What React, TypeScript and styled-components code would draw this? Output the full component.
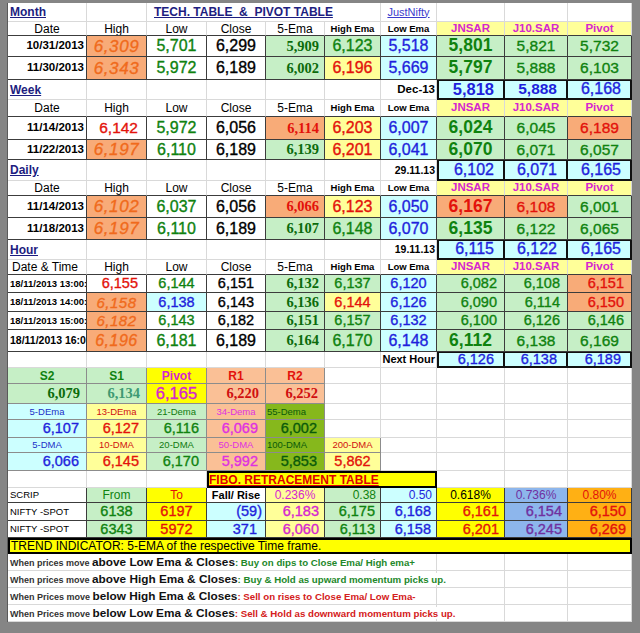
import React from "react";
import styled, { createGlobalStyle, css } from "styled-components";

const SANS = `"Liberation Sans", Arial, sans-serif`;
const SERIF = `"Liberation Serif", "Times New Roman", serif`;

const GREEN_BG = "#c6efc6";
const CYAN_BG = "#ccffff";
const PALE_Y = "#ffff99";
const YELLOW = "#ffff00";
const ORANGE_BG = "#f8ab78";
const PEACH = "#fac096";
const OLIVE = "#86b81c";
const PERI = "#8db6ec";
const AMBER = "#ffb014";

const GREEN = "#0f820f";
const DKGREEN = "#0b6b0b";
const RED = "#e3120b";
const BLUE = "#1f1fdc";
const ORANGE_T = "#f06a1c";
const MAGENTA = "#d526cf";
const NAVY = "#1d1d80";
const PURPLE = "#7030a0";

const COLS = "79px 60px 60px 59px 59px 56px 56px 68px 63px 64px";

type Align = "left" | "center" | "right";
type Line = "light" | "mid" | "dark";
type Look = {
  bg?: string;
  color?: string;
  fs?: number;
  bold?: boolean;
  italic?: boolean;
  serif?: boolean;
  al?: Align;
  pad?: number;
  ls?: number;
  u?: boolean;
  line?: Line;
  lineB?: Line;
  box?: boolean;
  boxL?: boolean;
  thick?: boolean;
  spill?: boolean;
};
type Spec = [React.ReactNode, Look, number?];

const LINE: Record<Line, string> = { light: "#d9d9d9", mid: "#8c8c8c", dark: "#3c3c3c" };
const JUSTIFY: Record<Align, string> = { left: "flex-start", center: "center", right: "flex-end" };

const GlobalStyle = createGlobalStyle`
  html, body {
    margin: 0;
    padding: 0;
    background: #858585;
  }
  body {
    font-family: ${SANS};
  }
`;

const Page = styled.div`
  width: 640px;
  height: 633px;
  padding: 3px 0 0 7px;
  box-sizing: border-box;
  background: #858585;
`;

const Sheet = styled.div`
  width: 625px;
  background: #ffffff;
  border-left: 1px solid #5a5a5a;
  box-sizing: border-box;
`;

const Row = styled.div<{ $h: number }>`
  display: grid;
  grid-template-columns: ${COLS};
  height: ${(p) => p.$h}px;
`;

const Cell = styled.div<{ $l: Look; $span: number }>`
  grid-column: span ${(p) => p.$span};
  display: flex;
  align-items: center;
  justify-content: ${(p) => JUSTIFY[p.$l.al ?? "center"]};
  box-sizing: border-box;
  min-width: 0;
  padding: 0 ${(p) => p.$l.pad ?? 2}px;
  overflow: ${(p) => (p.$l.spill ? "visible" : "hidden")};
  white-space: pre;
  line-height: 1;
  background: ${(p) => p.$l.bg ?? "#ffffff"};
  color: ${(p) => p.$l.color ?? "#000000"};
  font-family: ${(p) => (p.$l.serif ? SERIF : SANS)};
  font-size: ${(p) => p.$l.fs ?? 12}px;
  font-weight: ${(p) => (p.$l.bold ? 700 : 400)};
  font-style: ${(p) => (p.$l.italic ? "italic" : "normal")};
  letter-spacing: ${(p) => p.$l.ls ?? 0}px;
  text-decoration: ${(p) => (p.$l.u ? "underline" : "none")};
  text-underline-offset: 1px;
  -webkit-text-stroke: ${(p) => (!p.$l.bold && (p.$l.fs ?? 12) >= 13 ? 0.35 : 0)}px currentColor;
  border-right: 1px solid ${(p) => LINE[p.$l.line ?? "light"]};
  border-bottom: 1px solid ${(p) => LINE[p.$l.lineB ?? p.$l.line ?? "light"]};
  ${(p) =>
    p.$l.box &&
    css`
      border-right: 2px solid #111;
      border-bottom: 2px solid #111;
      box-shadow: inset 0 1px 0 #111;
    `}
  ${(p) =>
    p.$l.boxL &&
    css`
      border-left: 2px solid #111;
    `}
  ${(p) =>
    p.$l.thick &&
    css`
      border: 2px solid #000;
    `}
`;

// overflowing text of the rule rows, painted over the grid lines it crosses
const Spill = styled.span`
  position: relative;
  z-index: 1;
  background: #ffffff;
  padding-right: 2px;
`;
const Lead = styled.span`
  font-size: 9px;
  font-weight: 700;
  color: #333333;
`;
const Key = styled.span`
  font-size: 11.8px;
  font-weight: 700;
  color: #111111;
`;
const Tail = styled.span<{ $c: string }>`
  font-size: 9.7px;
  font-weight: 700;
  color: ${(p) => p.$c};
`;

const E: Spec = ["", {}];
const sz = (l: Look, fs: number, extra: Look = {}): Look => ({ ...l, fs, ...extra });

const label: Look = { bold: true, u: true, color: NAVY, fs: 12, al: "left", pad: 2 };
const hd: Look = { fs: 12, lineB: "dark" };
const hdS: Look = { fs: 9.5, bold: true, lineB: "dark" };
const hdJ: Look = { fs: 11.5, bold: true, color: MAGENTA, bg: PALE_Y, lineB: "dark" };
const date: Look = { fs: 11.5, bold: true, al: "right", pad: 2, line: "dark" };
const hdate: Look = { fs: 9.5, bold: true, al: "left", pad: 2, line: "dark" };
const hiO: Look = { bg: ORANGE_BG, color: ORANGE_T, italic: true, fs: 17, ls: 0.6, line: "dark" };
const hiR: Look = { color: RED, fs: 15.5, line: "dark", al: "right", pad: 8 };
const low: Look = { color: GREEN, fs: 16, line: "dark" };
const lowC: Look = { bg: CYAN_BG, color: BLUE, fs: 14.5, line: "dark" };
const close: Look = { fs: 16, line: "dark" };
const emaG: Look = { bg: GREEN_BG, color: DKGREEN, serif: true, bold: true, fs: 14.5, al: "right", pad: 5, line: "dark" };
const emaO: Look = { ...emaG, bg: ORANGE_BG, color: RED };
const heG: Look = { bg: GREEN_BG, color: GREEN, fs: 16, line: "dark" };
const heY: Look = { bg: PALE_Y, color: RED, fs: 16, line: "dark" };
const le: Look = { bg: CYAN_BG, color: BLUE, fs: 16, line: "dark" };
const jnG: Look = { bg: GREEN_BG, color: GREEN, fs: 17.5, bold: true, line: "dark" };
const jnO: Look = { ...jnG, bg: ORANGE_BG, color: RED };
const jG: Look = { bg: GREEN_BG, color: GREEN, fs: 15.5, line: "dark" };
const jO: Look = { ...jG, bg: ORANGE_BG, color: RED };
const jR: Look = { ...jG, fs: 14.5, al: "right", pad: 7 };
const jOR: Look = { ...jR, bg: ORANGE_BG, color: RED };
const boxC: Look = { bg: CYAN_BG, color: BLUE, fs: 16, al: "right", pad: 9, box: true };
const boxN: Look = { ...boxC, fs: 14.5 };
const stamp: Look = { bold: true, fs: 11.5, al: "right", pad: 1 };

const header = (first: string, look: Look = hd): Spec[] => [
  [first, look],
  ["High", hd],
  ["Low", hd],
  ["Close", hd],
  ["5-Ema", hd],
  ["High Ema", hdS],
  ["Low Ema", hdS],
  ["JNSAR", hdJ],
  ["J10.SAR", hdJ],
  ["Pivot", hdJ],
];

const pv = (bg: string, color: string, extra: Look = {}): Look => ({
  bg,
  color,
  fs: 12,
  bold: true,
  line: "mid",
  ...extra,
});
const pvNum = (bg: string, color: string): Look => ({
  bg,
  color,
  serif: true,
  bold: true,
  fs: 14.5,
  al: "right",
  pad: 6,
  line: "mid",
});
const maLab = (bg: string, color: string, al: Align = "center"): Look => ({
  bg,
  color,
  fs: 9.5,
  al,
  pad: 1,
  line: "mid",
});
const maNum = (bg: string, color: string): Look => ({
  bg,
  color,
  fs: 14.5,
  al: "right",
  pad: 7,
  line: "mid",
});
const fib = (bg: string, color: string, al: Align = "right", pad = 5): Look => ({
  bg,
  color,
  fs: 14.5,
  al,
  pad,
  line: "dark",
});
const fibH = (bg: string, color: string, al: Align = "center"): Look => ({
  bg,
  color,
  fs: 12,
  al,
  pad: 4,
  line: "dark",
});

const when = (lead: string, key: string, tail: string, c: string): Spec[] => [
  [
    <Spill>
      <Lead>{lead}</Lead>
      <Key>{key}</Key>
      <Tail $c={c}>{tail}</Tail>
    </Spill>,
    { al: "left", pad: 2, spill: true },
    7,
  ],
  E,
  E,
  E,
];

const ROWS: [number, Spec[]][] = [
  // Month
  [
    19,
    [
      ["Month", label],
      E,
      ["TECH. TABLE  &  PIVOT TABLE", { bold: true, u: true, color: NAVY, fs: 12, al: "left", pad: 7 }, 4],
      ["JustNifty", { u: true, color: "#3b3bcc", fs: 11 }],
      E,
      E,
      E,
    ],
  ],
  [14, header("Date")],
  [
    21,
    [
      ["10/31/2013", date],
      ["6,309", hiO],
      ["5,701", low],
      ["6,299", close],
      ["5,909", emaG],
      ["6,123", heG],
      ["5,518", le],
      ["5,801", jnG],
      ["5,821", jG],
      ["5,732", jG],
    ],
  ],
  [
    23,
    [
      ["11/30/2013", date],
      ["6,343", hiO],
      ["5,972", low],
      ["6,189", close],
      ["6,002", emaG],
      ["6,196", heY],
      ["5,669", le],
      ["5,797", jnG],
      ["5,888", jG],
      ["6,103", jG],
    ],
  ],
  // Week
  [
    20,
    [
      ["Week", label],
      E,
      E,
      E,
      E,
      E,
      ["Dec-13", stamp],
      ["5,818", { ...boxC, boxL: true, bold: true, fs: 16.5 }],
      ["5,888", { ...boxC, bold: true, fs: 15.5 }],
      ["6,168", boxC],
    ],
  ],
  [17, header("Date")],
  [
    23,
    [
      ["11/14/2013", date],
      ["6,142", hiR],
      ["5,972", low],
      ["6,056", close],
      ["6,114", emaO],
      ["6,203", heY],
      ["6,007", le],
      ["6,024", jnG],
      ["6,045", jG],
      ["6,189", jO],
    ],
  ],
  [
    20,
    [
      ["11/22/2013", date],
      ["6,197", hiO],
      ["6,110", low],
      ["6,189", close],
      ["6,139", emaG],
      ["6,201", heY],
      ["6,041", le],
      ["6,070", jnG],
      ["6,071", jG],
      ["6,057", jG],
    ],
  ],
  // Daily
  [
    21,
    [
      ["Daily", label],
      E,
      E,
      E,
      E,
      E,
      ["29.11.13", { ...stamp, fs: 10.5 }],
      ["6,102", { ...boxC, boxL: true }],
      ["6,071", boxC],
      ["6,165", boxC],
    ],
  ],
  [15, header("Date")],
  [
    22,
    [
      ["11/14/2013", date],
      ["6,102", hiO],
      ["6,037", low],
      ["6,056", close],
      ["6,066", emaO],
      ["6,123", heY],
      ["6,050", le],
      ["6,167", jnO],
      ["6,108", jO],
      ["6,001", jG],
    ],
  ],
  [
    22,
    [
      ["11/18/2013", date],
      ["6,197", hiO],
      ["6,110", low],
      ["6,189", close],
      ["6,107", emaG],
      ["6,148", heG],
      ["6,070", le],
      ["6,135", jnG],
      ["6,122", jG],
      ["6,065", jG],
    ],
  ],
  // Hour
  [
    20,
    [
      ["Hour", label],
      E,
      E,
      E,
      E,
      E,
      ["19.11.13", { ...stamp, fs: 10.5 }],
      ["6,115", { ...boxC, boxL: true }],
      ["6,122", boxC],
      ["6,165", boxC],
    ],
  ],
  [15, header("Date & Time", { ...hd, al: "left", pad: 4 })],
  [
    18,
    [
      ["18/11/2013 13:00:", hdate],
      ["6,155", sz(hiR, 14.5)],
      ["6,144", sz(low, 14.5)],
      ["6,151", sz(close, 14.5)],
      ["6,132", emaG],
      ["6,137", sz(heG, 14.5)],
      ["6,120", sz(le, 14.5)],
      ["6,082", jR],
      ["6,108", jR],
      ["6,151", jOR],
    ],
  ],
  [
    19,
    [
      ["18/11/2013 14:00:", hdate],
      ["6,158", sz(hiO, 15, { ls: 0.5 })],
      ["6,138", lowC],
      ["6,143", sz(close, 14.5)],
      ["6,136", emaG],
      ["6,144", sz(heY, 14.5)],
      ["6,126", sz(le, 14.5)],
      ["6,090", jR],
      ["6,114", jR],
      ["6,150", jOR],
    ],
  ],
  [
    18,
    [
      ["18/11/2013 15:00:", hdate],
      ["6,182", sz(hiO, 15, { ls: 0.5 })],
      ["6,143", sz(low, 14.5)],
      ["6,182", sz(close, 14.5)],
      ["6,151", emaG],
      ["6,157", sz(heG, 14.5)],
      ["6,132", sz(le, 14.5)],
      ["6,100", jR],
      ["6,126", jR],
      ["6,146", jR],
    ],
  ],
  [
    22,
    [
      ["18/11/2013 16:00", sz(hdate, 10.5)],
      ["6,196", sz(hiO, 16, { ls: 0.5 })],
      ["6,181", low],
      ["6,189", close],
      ["6,164", emaG],
      ["6,170", heG],
      ["6,148", le],
      ["6,112", jnG],
      ["6,138", jG],
      ["6,169", jG],
    ],
  ],
  [
    16,
    [
      E,
      E,
      E,
      E,
      E,
      E,
      ["Next Hour", { ...stamp, fs: 11 }],
      ["6,126", { ...boxN, boxL: true }],
      ["6,138", boxN],
      ["6,189", boxN],
    ],
  ],
  // Pivot levels
  [
    16,
    [
      ["S2", pv(GREEN_BG, GREEN)],
      ["S1", pv(GREEN_BG, GREEN)],
      ["Pivot", pv(YELLOW, MAGENTA)],
      ["R1", pv(PEACH, RED)],
      ["R2", pv(PEACH, RED)],
      E,
      E,
      E,
      E,
      E,
    ],
  ],
  [
    20,
    [
      ["6,079", pvNum(GREEN_BG, DKGREEN)],
      ["6,134", pvNum(GREEN_BG, "#3f9a73")],
      ["6,165", { bg: YELLOW, color: MAGENTA, fs: 16.5, line: "mid" }],
      ["6,220", pvNum(PEACH, "#d01010")],
      ["6,252", pvNum(PEACH, "#d01010")],
      E,
      E,
      E,
      E,
      E,
    ],
  ],
  [
    16,
    [
      ["5-DEma", maLab(CYAN_BG, "#2030c8")],
      ["13-DEma", maLab(PALE_Y, "#d01010")],
      ["21-Dema", maLab(GREEN_BG, "#0f7a0f")],
      ["34-Dema", maLab(PEACH, "#e030e0")],
      ["55-Dema", maLab(OLIVE, "#0a5a0a", "left")],
      E,
      E,
      E,
      E,
      E,
    ],
  ],
  [
    18,
    [
      ["6,107", maNum(CYAN_BG, BLUE)],
      ["6,127", maNum(PALE_Y, RED)],
      ["6,116", maNum(GREEN_BG, GREEN)],
      ["6,069", maNum(PEACH, "#e030e0")],
      ["6,002", maNum(OLIVE, "#0a5a0a")],
      E,
      E,
      E,
      E,
      E,
    ],
  ],
  [
    15,
    [
      ["5-DMA", maLab(CYAN_BG, "#2030c8")],
      ["10-DMA", maLab(PALE_Y, "#d01010")],
      ["20-DMA", maLab(GREEN_BG, "#0f7a0f")],
      ["50-DMA", maLab(PEACH, "#e030e0")],
      ["100-DMA", maLab(OLIVE, "#0a5a0a", "left")],
      ["200-DMA", maLab(PALE_Y, "#d01010")],
      E,
      E,
      E,
      E,
    ],
  ],
  [
    18,
    [
      ["6,066", maNum(CYAN_BG, BLUE)],
      ["6,145", maNum(PALE_Y, RED)],
      ["6,170", maNum(GREEN_BG, GREEN)],
      ["5,992", maNum(PEACH, "#e030e0")],
      ["5,853", maNum(OLIVE, "#0a5a0a")],
      ["5,862", { ...maNum(PALE_Y, RED), al: "center", pad: 2 }],
      E,
      E,
      E,
      E,
    ],
  ],
  // Fibonacci
  [
    17,
    [
      E,
      E,
      E,
      ["FIBO. RETRACEMENT TABLE", { bg: YELLOW, color: "#e00000", bold: true, u: true, fs: 12, al: "left", pad: 0, thick: true }, 4],
      E,
      E,
      E,
    ],
  ],
  [
    15,
    [
      ["SCRIP", { fs: 9.5, al: "left", pad: 2, line: "dark" }],
      ["From", fibH(GREEN_BG, GREEN)],
      ["To", fibH(YELLOW, RED)],
      ["Fall/ Rise", { fs: 11, bold: true, line: "dark" }],
      ["0.236%", fibH(PALE_Y, MAGENTA)],
      ["0.38", fibH(GREEN_BG, GREEN, "right")],
      ["0.50", fibH(CYAN_BG, BLUE, "right")],
      ["0.618%", fibH(YELLOW, "#000000")],
      ["0.736%", fibH(PERI, PURPLE)],
      ["0.80%", fibH(AMBER, RED)],
    ],
  ],
  [
    18,
    [
      ["NIFTY -SPOT", { fs: 9.5, al: "left", pad: 2, line: "dark" }],
      ["6138", fib(GREEN_BG, GREEN, "center")],
      ["6197", fib(YELLOW, RED, "center")],
      ["(59)", fib(CYAN_BG, BLUE, "right", 3)],
      ["6,183", fib(PALE_Y, MAGENTA)],
      ["6,175", fib(GREEN_BG, GREEN)],
      ["6,168", fib(CYAN_BG, BLUE)],
      ["6,161", fib(YELLOW, RED)],
      ["6,154", fib(PERI, PURPLE)],
      ["6,150", fib(AMBER, RED)],
    ],
  ],
  [
    17,
    [
      ["NIFTY -SPOT", { fs: 9.5, al: "left", pad: 2, line: "dark" }],
      ["6343", fib(GREEN_BG, GREEN, "center")],
      ["5972", fib(YELLOW, RED, "center")],
      ["371", fib(CYAN_BG, BLUE, "right", 8)],
      ["6,060", fib(PALE_Y, MAGENTA)],
      ["6,113", fib(GREEN_BG, GREEN)],
      ["6,158", fib(CYAN_BG, BLUE)],
      ["6,201", fib(YELLOW, RED)],
      ["6,245", fib(PERI, PURPLE)],
      ["6,269", fib(AMBER, RED)],
    ],
  ],
  [
    16,
    [["TREND INDICATOR: 5-EMA of the respective Time frame.", { bg: YELLOW, fs: 12, al: "left", pad: 1, thick: true }, 10]],
  ],
  [17, when("When prices move ", "above Low Ema & Closes", ": Buy on dips to Close Ema/ High ema+", "#23882a")],
  [17, when("When prices move ", "above High Ema & Closes", ": Buy & Hold as upward momentum picks up.", "#23882a")],
  [17, when("When Prices move ", "below High Ema & Closes", ": Sell on rises to Close Ema/ Low Ema-", "#d42020")],
  [17, when("When Prices move ", "below Low Ema & Closes", ": Sell & Hold as downward momentum picks up.", "#d42020")],
];

function App() {
  return (
    <>
      <GlobalStyle />
      <Page>
        <Sheet>
          {ROWS.map(([h, cells], r) => (
            <Row key={r} $h={h}>
              {cells.map(([text, look, span], c) => (
                <Cell key={c} $l={look} $span={span ?? 1}>
                  {text}
                </Cell>
              ))}
            </Row>
          ))}
        </Sheet>
      </Page>
    </>
  );
}

export default App;
